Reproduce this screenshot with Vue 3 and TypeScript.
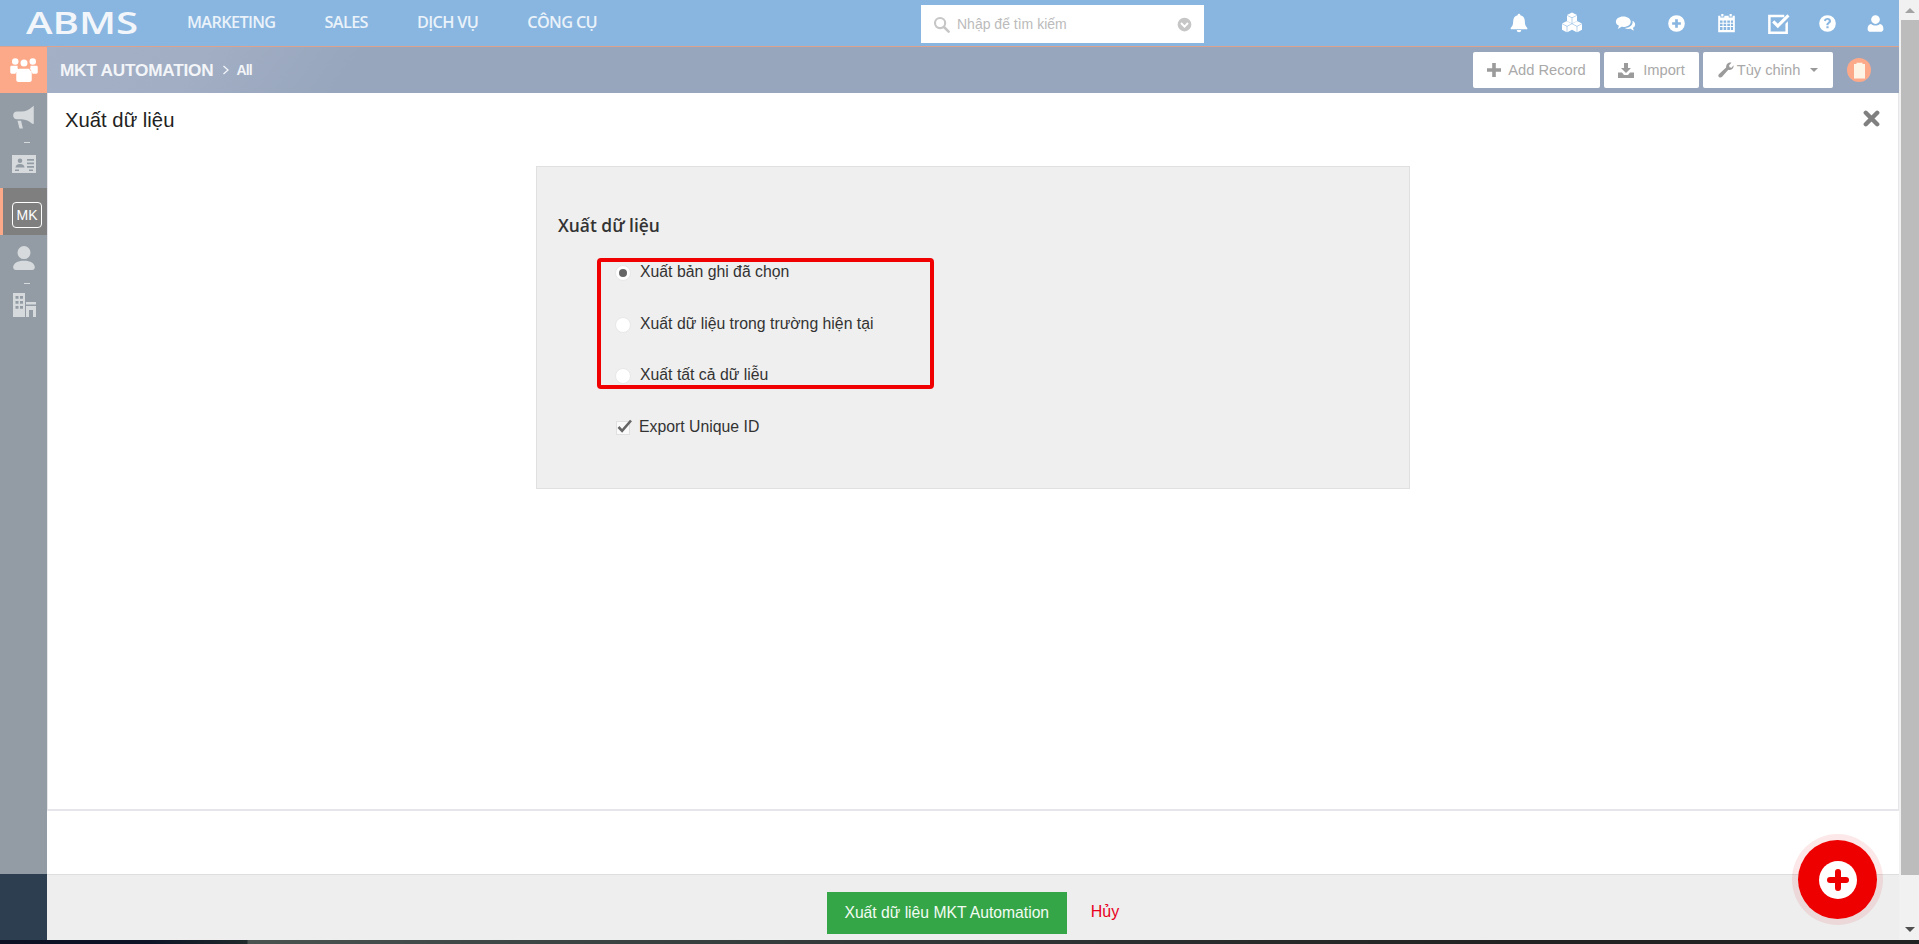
<script setup lang="ts">
import { ref } from 'vue'

// three faces of one little cube, used for the cubes icon
function cube(x: number, y: number, s: number): string {
  const h = s / 2
  const g = 0.6
  return (
    `M${x} ${y - s}l${s} ${h}l${-s} ${h}l${-s} ${-h}z` +
    `M${x - s} ${y - h + g}l${s - g / 2} ${h}v${s + 0.6}l${-s + g / 2} ${-h}z` +
    `M${x + s} ${y - h + g}l${-s + g / 2} ${h}v${s + 0.6}l${s - g / 2} ${-h}z`
  )
}

const menu = ['MARKETING', 'SALES', 'DỊCH VỤ', 'CÔNG CỤ']

// cell is the slot width, the icons are not evenly spaced in the original
const topIcons = [
  { name: 'bell', size: 20, cell: 52, d: 'M12 1a1.6 1.6 0 0 1 1.6 1.7C17.200 3.400 19 6.300 19 10c0 4.500 1.200 6.400 3 8v1.500H2V18c1.800-1.600 3-3.500 3-8 0-3.700 1.800-6.600 5.400-7.300A1.600 1.600 0 0 1 12 1zM9.300 20.500h5.400a2.700 2.700 0 0 1-5.400 0z' },
  { name: 'cubes', size: 24, cell: 54, d: cube(12, 6.500, 5) + cube(7, 15, 5) + cube(17, 15, 5) },
  { name: 'comments', size: 21, cell: 53, d: 'M9.500 4C14.500 4 18 6.600 18 10s-3.500 6-8.500 6c-.9 0-1.600-.1-2.300-.2C6 17 4.500 17.800 3 18c.8-.9 1.400-2 1.500-3.300C2.400 13.700 1 12 1 10c0-3.400 3.500-6 8.500-6zM19.500 8.500C21.800 9.500 23 11 23 13c0 1.600-1 3-2.500 3.900.1 1.100.6 2.200 1.300 3.100-1.400-.2-2.700-.9-3.800-2-.6.1-1.300.2-2 .2-1.800 0-3.500-.4-4.700-1.200 5.200-.1 9.700-2.800 8.700-8.500z' },
  { name: 'plus', size: 19, cell: 49.500, d: 'M12 1.500a10.500 10.500 0 1 1 0 21 10.500 10.500 0 0 1 0-21zM10.300 6.500v3.800H6.500v3.400h3.800v3.800h3.400v-3.800h3.800v-3.400h-3.800V6.500z' },
  { name: 'calendar', size: 21, cell: 50, d: 'M6 1h2.500v3H6zM15.500 1H18v3h-2.500zM2.500 3H5v2h4.500V3h5v2H19V3h2.500v19h-19zM4.500 8.500v2.500h3V8.500zM8.700 8.500v2.500h3V8.500zM12.900 8.500v2.500h3V8.500zM17 8.500v2.500h2.500V8.500zM4.500 12.200v2.600h3v-2.600zM8.700 12.200v2.600h3v-2.600zM12.900 12.200v2.600h3v-2.600zM17 12.200v2.600h2.500v-2.600zM4.500 16v3.500h3V16zM8.700 16v3.500h3V16zM12.900 16v3.500h3V16zM17 16v3.500h2.500V16z' },
  { name: 'check', size: 25, cell: 51, d: 'M3 3.500h15.500v2.400H5.400v13.700h14.200v-7.300l2.400-2.400v12.100H3zM21.500 3l2 2.200L12.300 16.500 6.800 11l2.100-2.100 3.400 3.400z' },
  { name: 'question', size: 19, cell: 49, d: 'M12 1.500a10.500 10.500 0 1 1 0 21 10.500 10.500 0 0 1 0-21zM12 5c-2.500 0-4.200 1.300-4.500 3.500l2.600.5c.2-1 .8-1.600 1.800-1.600 1 0 1.700.5 1.700 1.400 0 .8-.5 1.200-1.300 1.800-1.100.8-1.700 1.500-1.700 3v.7h2.700v-.5c0-.8.300-1.100 1.100-1.700 1.100-.8 2-1.700 2-3.400C16.400 6.400 14.500 5 12 5zM10.600 15.400V18h2.800v-2.600z' },
  { name: 'user', size: 19, cell: 47.500, d: 'M12 1.500a5.500 5.500 0 1 1 0 11 5.500 5.500 0 0 1 0-11zM6.500 12.500c1.400 1.300 3.400 2 5.500 2s4.100-.7 5.500-2c2.900.3 4.500 2.900 4.500 6.300 0 2.200-1.500 3.700-3.700 3.700H5.700C3.500 22.500 2 21 2 18.800c0-3.400 1.600-6 4.500-6.300z' },
]

const options = ['Xuất bản ghi đã chọn', 'Xuất dữ liệu trong trường hiện tại', 'Xuất tất cả dữ liễu']
const selected = ref(0)
const exportId = ref(true)
</script>

<template>
  <div class="app">
    <div class="shell">
      <div class="page">
        <header class="topbar">
          <div class="logo"><span>ABMS</span></div>
          <nav class="menu">
            <a v-for="item in menu" :key="item">{{ item }}</a>
          </nav>
          <div class="search">
            <svg class="search-icon" viewBox="0 0 24 24"><circle cx="10" cy="10" r="7.200" fill="none" stroke="currentColor" stroke-width="3" /><path d="M15.500 15.500 22 22" stroke="currentColor" stroke-width="3.600" stroke-linecap="round" /></svg>
            <span class="search-text">Nhập để tìm kiếm</span>
            <svg class="search-down" viewBox="0 0 24 24"><path fill="currentColor" fill-rule="evenodd" d="M12 1a11 11 0 1 1 0 22 11 11 0 0 1 0-22zM7.500 8.500 5.300 10.700 12 17.400l6.700-6.700-2.200-2.200-4.500 4.500z" /></svg>
          </div>
          <div class="top-icons">
            <span v-for="icon in topIcons" :key="icon.name" class="top-icon" :style="{ width: icon.cell + 'px' }">
              <svg :width="icon.size" :height="icon.size" viewBox="0 0 24 24"><path fill="currentColor" fill-rule="evenodd" :d="icon.d" /></svg>
            </span>
          </div>
        </header>

        <div class="subbar">
          <div class="module-icon">
            <svg width="30" height="30" viewBox="0 0 24 24"><path fill="currentColor" d="M12 3.500a2.800 2.800 0 1 1 0 5.600 2.800 2.800 0 0 1 0-5.600zM5 2.500a2.600 2.600 0 1 1 0 5.200 2.600 2.600 0 0 1 0-5.200zM19 2.500a2.600 2.600 0 1 1 0 5.200 2.600 2.600 0 0 1 0-5.200zM1 9.500c0-.8.700-1 1.500-1h4.400C6.600 10 7 11 7.800 11.800 6.400 12.500 5.500 13.500 5.200 15H2.500C1.500 15 1 14.400 1 13.500zM23 9.500c0-.8-.7-1-1.500-1h-4.400c.3 1.500-.1 2.500-.9 3.300 1.400.7 2.300 1.700 2.600 3.200h2.700c1 0 1.500-.6 1.500-1.500zM8.500 11h7c1.900 0 2.700 1.500 2.700 3.500v5.300c0 1.200-.8 1.700-1.800 1.700H7.600c-1 0-1.800-.5-1.800-1.700v-5.300C5.800 12.500 6.600 11 8.500 11z" /></svg>
          </div>
          <div class="crumb">
            <strong>MKT AUTOMATION</strong>
            <svg class="crumb-sep" width="8" height="10" viewBox="0 0 8 10"><path d="M1.500 1 6 5 1.500 9" fill="none" stroke="currentColor" stroke-width="1.300" /></svg>
            <span>All</span>
          </div>
          <div class="actions">
            <button class="btn btn-add">
              <svg width="14" height="14" viewBox="0 0 14 14"><path fill="currentColor" d="M5.200 0h3.600v5.200H14v3.600H8.800V14H5.200V8.800H0V5.200h5.200z" /></svg>
              Add Record
            </button>
            <button class="btn btn-import">
              <svg width="16" height="15" viewBox="0 0 16 15"><path fill="currentColor" d="M6 0h4v5h3L8 10 3 5h3zM0 9.500h4L6 12h4l2-2.500h4V15H0z" /></svg>
              Import
            </button>
            <button class="btn btn-custom">
              <svg width="16" height="16" viewBox="0 0 16 16"><path fill="currentColor" d="M15.500 3.200c.5 2.300-1.300 4.700-3.800 4.700-.5 0-1-.1-1.400-.2l-6.200 7.100c-.9 1-2.300 1-3.100.2-.9-.8-.9-2.200.1-3.100l7-6.300C8 3 9.400.500 12.200.500c.5 0 .9.100 1.300.2l-2.400 2.500.4 2.100 2.100.4z" /></svg>
              Tùy chỉnh
              <i class="caret"></i>
            </button>
          </div>
          <div class="clip">
            <svg width="13" height="17" viewBox="0 0 13 17"><path fill="currentColor" d="M1 2h2.500V.8h6V2H12v14.500H1z" /></svg>
          </div>
        </div>

        <div class="body">
          <aside class="sidebar">
            <div class="side-items">
              <div class="side-item">
                <svg width="26" height="26" viewBox="0 0 24 24"><path fill="currentColor" d="M21 1.500v17l-1.500-.3c-2.500-2.500-6-4-9.500-4.200H5.500C3.500 14 2 12.500 2 10.500S3.500 7 5.500 7H10c3.500-.2 7-1.700 9.500-4.200zM6 15.500h3.300l1.700 7H7.800z" /></svg>
              </div>
              <div class="side-item dash">
                <svg width="26" height="24" viewBox="0 0 26 24"><path fill="currentColor" fill-rule="evenodd" d="M1 3h24v18H1zM9 6.500a2.300 2.300 0 1 0 0 4.600 2.300 2.300 0 0 0 0-4.600zM4.500 15.500h9c0-2-1.500-3.600-4.500-3.600s-4.500 1.600-4.500 3.600zM16 7v1.800h7V7zM16 10.500v1.800h7v-1.800zM16 14v1.800h7V14zM4 17.500v1.500h4v-1.500zM18 17.500v1.500h4v-1.500z" /></svg>
              </div>
              <div class="side-item active"><span class="mk">MK</span></div>
              <div class="side-item">
                <svg width="26" height="26" viewBox="0 0 24 24"><path fill="currentColor" d="M12 1a6 6 0 1 1 0 12 6 6 0 0 1 0-12zM12 14.500c6 0 10 2.500 10 6 0 1.500-1 2.500-2.500 2.500h-15C3 23 2 22 2 20.500c0-3.500 4-6 10-6z" /></svg>
              </div>
              <div class="side-item dash">
                <svg width="26" height="26" viewBox="0 0 26 26"><path fill="currentColor" fill-rule="evenodd" d="M2 1h12v24H2zM4.500 4v2.800h3V4zM9 4v2.800h3V4zM4.500 9v2.800h3V9zM9 9v2.800h3V9zM4.500 14v2.800h3V14zM9 14v2.800h3V14zM15 10h10v2.500H15zM15 14h10v11h-3v-7h-4v7h-3z" /></svg>
              </div>
            </div>
            <div class="side-dark"></div>
          </aside>

          <main class="main">
            <div class="form-area">
              <div class="title-row">
                <h1>Xuất dữ liệu</h1>
                <svg class="close" width="17" height="17" viewBox="0 0 17 17"><path d="M2.800 2.800l11.400 11.400M14.200 2.800 2.800 14.200" stroke="currentColor" stroke-width="4.400" stroke-linecap="round" /></svg>
              </div>
              <section class="panel">
                <h2>Xuất dữ liệu</h2>
                <div class="options">
                  <label v-for="(opt, i) in options" :key="opt" class="option" @click="selected = i">
                    <span class="radio" :class="{ on: selected === i }"></span>
                    <span class="option-text">{{ opt }}</span>
                  </label>
                </div>
                <label class="check-row" @click="exportId = !exportId">
                  <span class="checkbox">
                    <svg v-if="exportId" width="17" height="16" viewBox="0 0 17 16"><path d="M2.500 9l3.600 3.800L15 2.500" fill="none" stroke="#666" stroke-width="2.600" /></svg>
                  </span>
                  <span class="check-text">Export Unique ID</span>
                </label>
                <!-- red annotation drawn over the radio group -->
                <div class="highlight"></div>
              </section>
            </div>
            <div class="gap"></div>
            <footer class="footer">
              <button class="export-btn">Xuất dữ liêu MKT Automation</button>
              <a class="cancel">Hủy</a>
            </footer>
          </main>
        </div>
      </div>

      <div class="scrollbar">
        <i class="arrow-up"></i>
        <div class="thumb"></div>
        <i class="arrow-down"></i>
      </div>
    </div>
    <div class="taskbar"></div>

    <button class="fab" aria-label="Add">
      <span class="fab-inner">
        <svg width="22" height="22" viewBox="0 0 22 22"><path d="M3 11h16M11 3v16" stroke="#ee0000" stroke-width="6" stroke-linecap="round" /></svg>
      </span>
    </button>
  </div>
</template>

<style>
html,
body {
  margin: 0;
  overflow: hidden;
}
</style>

<style scoped>
.app {
  position: relative;
  width: 1919px;
  height: 944px;
  display: flex;
  flex-direction: column;
  font-family: "Liberation Sans", Arial, sans-serif;
  font-size: 16px;
  color: #333;
  background: #fff;
}

.shell {
  flex: 1;
  display: flex;
  min-height: 0;
}

.page {
  flex: 1;
  min-width: 0;
  display: flex;
  flex-direction: column;
}

/* top bar */
.topbar {
  height: 46px;
  flex: none;
  display: flex;
  align-items: center;
  background: #88b6e0;
  border-bottom: 1px solid #dba28f;
}

.logo {
  width: 187px;
  flex: none;
  box-sizing: border-box;
  padding-left: 26px;
  font-family: "Open Sans", sans-serif;
  font-size: 30px;
  line-height: 46px;
  font-weight: 600;
  color: #f2f6fb;
}

.logo span {
  display: inline-block;
  transform: scaleX(1.34);
  transform-origin: left center;
}

.menu {
  display: flex;
  gap: 49px;
  width: 410px;
  flex: none;
}

.menu a {
  font-family: "Open Sans", sans-serif;
  font-size: 16.300px;
  font-weight: 600;
  letter-spacing: -0.650px;
  white-space: nowrap;
  color: #eaf2fa;
  margin-top: -2px;
}

.search {
  margin-left: 324px;
  width: 283px;
  height: 38px;
  flex: none;
  margin-top: 2px;
  box-sizing: border-box;
  padding: 0 12px;
  display: flex;
  align-items: center;
  background: #fff;
  color: #c6c6c6;
}

.search-icon {
  width: 17px;
  height: 17px;
}

.search-text {
  margin-left: 7px;
  flex: 1;
  font-size: 14px;
  color: #bbb;
}

.search-down {
  width: 15px;
  height: 15px;
}

.top-icons {
  margin-left: auto;
  display: flex;
  align-items: center;
  color: #fff;
}

.top-icon {
  display: flex;
  align-items: center;
  justify-content: center;
}

/* module bar */
.subbar {
  height: 46px;
  flex: none;
  display: flex;
  align-items: center;
  background: linear-gradient(125deg, #a3b0c6 0, #a1aec4 170px, #98a6bd 300px);
}

.module-icon {
  width: 47px;
  height: 46px;
  flex: none;
  display: flex;
  align-items: center;
  justify-content: center;
  background: #fca98a;
  color: #fff;
}

.crumb {
  margin-left: 13px;
  display: flex;
  align-items: center;
  color: #f3f5f8;
}

.crumb strong {
  font-size: 17.200px;
  letter-spacing: -0.200px;
}

.crumb-sep {
  margin: 0 6px 0 9px;
}

.crumb span {
  font-size: 14px;
  font-weight: 700;
  letter-spacing: -0.900px;
}

.actions {
  margin-left: auto;
  display: flex;
  gap: 4px;
}

.btn {
  height: 36px;
  box-sizing: border-box;
  display: flex;
  align-items: center;
  justify-content: center;
  border: 0;
  padding: 0;
  border-radius: 2px;
  background: #fff;
  color: #a9a9a9;
  font-family: "Liberation Sans", Arial, sans-serif;
  font-size: 14.700px;
}

.btn svg {
  color: #9b9b9b;
}

.btn-add {
  width: 127px;
  gap: 7px;
}

.btn-import {
  width: 95px;
  gap: 9px;
}

.btn-custom {
  width: 130px;
  gap: 3px;
}

.caret {
  margin-left: 7px;
  border-top: 4px solid #999;
  border-left: 4px solid transparent;
  border-right: 4px solid transparent;
}

.clip {
  width: 24px;
  height: 24px;
  margin: 0 28px 0 14px;
  flex: none;
  border-radius: 50%;
  display: flex;
  align-items: center;
  justify-content: center;
  background: #fca98a;
  color: #fdf4e6;
}

/* body */
.body {
  flex: 1;
  min-height: 0;
  display: flex;
}

.sidebar {
  width: 47px;
  flex: none;
  display: flex;
  flex-direction: column;
  background: #939ca4;
}

.side-items {
  flex: 1;
}

.side-item {
  position: relative;
  height: 47px;
  display: flex;
  align-items: center;
  justify-content: center;
  color: #d6dadd;
}

.side-item.dash::before {
  content: "";
  position: absolute;
  top: 2px;
  left: 24px;
  width: 6px;
  height: 1px;
  background: #d6dadd;
}

.side-item.active {
  position: relative;
  top: 1px;
  background: #7f7f7f;
  border-left: 3px solid #fca98a;
  box-sizing: border-box;
}

.mk {
  width: 30px;
  height: 26px;
  box-sizing: border-box;
  border: 1px solid #fff;
  border-radius: 4px;
  display: flex;
  align-items: center;
  justify-content: center;
  font-size: 14px;
  color: #fff;
  margin: 6px 0 0 4px;
}

.side-dark {
  height: 66px;
  flex: none;
  background: #2c3e50;
}

.main {
  flex: 1;
  min-width: 0;
  display: flex;
  flex-direction: column;
}

.form-area {
  flex: 1;
  min-height: 0;
  border: 1px solid #e6e6ea;
  border-width: 0 1px 2px 1px;
}

.title-row {
  height: 54px;
  display: flex;
  align-items: center;
  justify-content: space-between;
  padding: 0 18px 0 17px;
}

.title-row h1 {
  margin: 0;
  font-size: 20.300px;
  font-weight: 400;
  color: #222;
}

.close {
  color: #808080;
  margin-top: -4px;
}

.panel {
  position: relative;
  width: 874px;
  height: 323px;
  box-sizing: border-box;
  margin: 19px auto 0;
  padding: 48px 0 48px 21px;
  background: #efefef;
  border: 1px solid #e0e0e0;
}

.panel h2 {
  margin: 0;
  font-family: "Open Sans", sans-serif;
  font-size: 17.400px;
  line-height: 20px;
  font-weight: 600;
  color: #333;
}

.options {
  margin: 25px 0 0 57px;
  display: flex;
  flex-direction: column;
  gap: 27.500px;
}

.option {
  height: 24px;
  display: flex;
  align-items: center;
  gap: 9px;
  cursor: pointer;
}

.radio {
  width: 16px;
  height: 16px;
  flex: none;
  margin-top: 2px;
  border-radius: 50%;
  background: #fff;
  border: 1px solid #e8e8e8;
  box-sizing: border-box;
  display: flex;
  align-items: center;
  justify-content: center;
}

.radio.on::after {
  content: "";
  width: 8px;
  height: 8px;
  border-radius: 50%;
  background: #666;
}

.option-text,
.check-text {
  font-size: 15.800px;
  color: #333;
}

.check-row {
  margin: 28px 0 0 58px;
  height: 24px;
  display: flex;
  align-items: center;
  gap: 9px;
  cursor: pointer;
}

.checkbox {
  position: relative;
  width: 14px;
  height: 14px;
  flex: none;
  margin-top: 2px;
  background: #fafafa;
  border: 1px solid #e0e0e0;
  box-sizing: border-box;
}

.checkbox svg {
  position: absolute;
  left: -1px;
  top: -4px;
}

.highlight {
  position: absolute;
  left: 60px;
  top: 91px;
  width: 337px;
  height: 131px;
  box-sizing: border-box;
  border: 4px solid #f00000;
  border-radius: 4px;
  pointer-events: none;
}

.gap {
  height: 63px;
  flex: none;
}

.footer {
  height: 66px;
  flex: none;
  box-sizing: border-box;
  padding-top: 17px;
  display: flex;
  justify-content: center;
  align-items: flex-start;
  gap: 24px;
  background: #eeeeee;
  border-top: 1px solid #dedede;
}

.export-btn {
  width: 240px;
  height: 42px;
  border: 0;
  padding: 0;
  background: #35a647;
  color: #f2fbf3;
  font-family: "Liberation Sans", Arial, sans-serif;
  font-size: 15.700px;
}

.cancel {
  height: 42px;
  line-height: 40px;
  font-size: 16px;
  color: #e8001c;
}

/* browser scrollbar */
.scrollbar {
  width: 20px;
  flex: none;
  position: relative;
  display: flex;
  flex-direction: column;
  align-items: flex-end;
  background: #f1f1f1;
}

.arrow-up,
.arrow-down {
  position: absolute;
  left: 6px;
  border-left: 5px solid transparent;
  border-right: 5px solid transparent;
}

.arrow-up {
  top: 8px;
  border-bottom: 5px solid #a3a3a3;
}

.arrow-down {
  bottom: 8px;
  border-top: 5px solid #505050;
}

.thumb {
  width: 18px;
  height: 855px;
  margin-top: 20px;
  background: #bcbcbc;
}

.taskbar {
  height: 4px;
  flex: none;
  background: linear-gradient(90deg, #0c1022 0, #0e1426 150px, #1f2a2c 247px, #4a5350 248px, #3a4242 600px, #222 1500px);
}

.fab {
  position: absolute;
  left: 1798px;
  top: 840px;
  width: 79px;
  height: 79px;
  border: 0;
  padding: 0;
  border-radius: 50%;
  background: #ee0000;
  box-shadow: 0 0 0 6px rgba(230, 30, 30, 0.1);
  display: flex;
  align-items: center;
  justify-content: center;
}

.fab-inner {
  width: 38px;
  height: 38px;
  border-radius: 50%;
  background: #fff;
  display: flex;
  align-items: center;
  justify-content: center;
}
</style>
